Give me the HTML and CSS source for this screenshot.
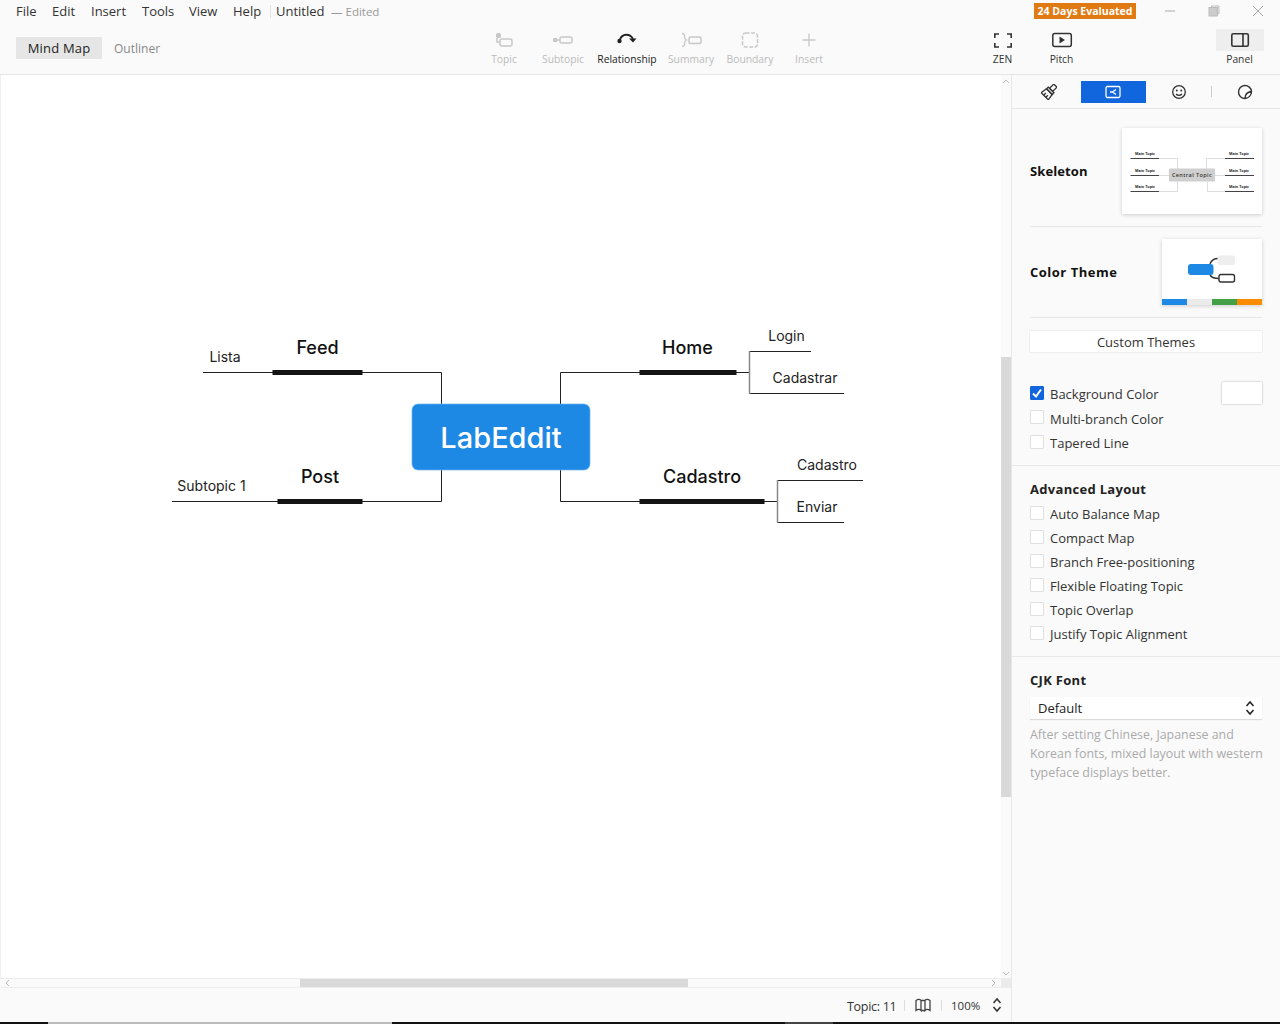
FILE: index.html
```html
<!DOCTYPE html>
<html lang="en">
<head>
<meta charset="utf-8">
<title>Untitled - Mind Map</title>
<link rel="stylesheet" href="styles.css">
</head>
<body>
<div class="app">
  <header class="top">
    <div class="titlebar">
      <nav class="menu">
        <span class="menu-file">File</span><span class="menu-edit">Edit</span><span class="menu-insert">Insert</span><span class="menu-tools">Tools</span><span class="menu-view">View</span><span class="menu-help">Help</span>
      </nav>
      <span class="title-sep"></span>
      <span class="doc-title">Untitled</span>
      <span class="doc-state">— Edited</span>
      <span class="badge">24 Days Evaluated</span>
      <div class="win">
        <svg width="12" height="12" viewBox="0 0 12 12"><path d="M1 6h10" stroke="#aaa" stroke-width="1" fill="none"/></svg>
        <svg width="12" height="12" viewBox="0 0 12 12"><path d="M3.5 2.5V1h7.500v7.500h-1.500" stroke="#bbb" fill="none"/><rect x="1" y="2.500" width="8.500" height="8.500" fill="#ccc" stroke="#bbb"/></svg>
        <svg width="12" height="12" viewBox="0 0 12 12"><path d="M1 1l10 10M11 1L1 11" stroke="#aaa" fill="none"/></svg>
      </div>
    </div>
    <div class="toolbar">
      <div class="modes">
        <span class="mode mode-on">Mind Map</span>
        <span class="mode">Outliner</span>
      </div>
      <div class="tools">
        <div class="tool off">
          <svg width="20" height="18" viewBox="0 0 20 18"><rect x="2" y="2" width="5" height="5" rx="1.500" fill="#c8c8c8"/><path d="M3 7v4h3" stroke="#c8c8c8" stroke-width="1.500" fill="none"/><rect x="6" y="8" width="12" height="7" rx="2" fill="none" stroke="#c8c8c8" stroke-width="1.500"/></svg>
          <span>Topic</span>
        </div>
        <div class="tool off">
          <svg width="22" height="18" viewBox="0 0 22 18"><rect x="1" y="7" width="4" height="4" fill="#c8c8c8"/><path d="M5 9h3" stroke="#c8c8c8" stroke-width="1.500"/><rect x="8" y="6" width="12" height="6" rx="1.500" fill="none" stroke="#c8c8c8" stroke-width="1.500"/></svg>
          <span>Subtopic</span>
        </div>
        <div class="tool rel">
          <svg width="22" height="18" viewBox="0 0 22 18"><path d="M4 8.500C6 2.500 14 2 17 8" stroke="#222" stroke-width="1.800" fill="none"/><circle cx="3.500" cy="10" r="2.200" fill="#222"/><path d="M13 7.500h7.500l-3.500 4z" fill="#222"/></svg>
          <span>Relationship</span>
        </div>
        <div class="tool off">
          <svg width="22" height="18" viewBox="0 0 22 18"><path d="M2 2.500c3 0 2.500 1 2.500 3s0 2.500 2 3.500c-2 1-2 1.500-2 3.500s.5 3-2.500 3" stroke="#c8c8c8" stroke-width="1.300" fill="none"/><rect x="9" y="6" width="12" height="6.500" rx="1.500" fill="none" stroke="#c8c8c8" stroke-width="1.500"/></svg>
          <span>Summary</span>
        </div>
        <div class="tool off">
          <svg width="20" height="18" viewBox="0 0 20 18"><rect x="2.500" y="2" width="15" height="14" rx="3" fill="none" stroke="#c8c8c8" stroke-width="1.500" stroke-dasharray="4 1.500"/></svg>
          <span>Boundary</span>
        </div>
        <div class="tool off">
          <svg width="20" height="18" viewBox="0 0 20 18"><path d="M10 2.500v13M3.500 9h13" stroke="#c8c8c8" stroke-width="1.300" fill="none"/></svg>
          <span>Insert</span>
        </div>
      </div>
      <div class="tools-right">
        <div class="tool on">
          <svg width="20" height="18" viewBox="0 0 20 18"><path d="M6 3H1.800v4M14 3h4.200v4M6 16H1.800v-4M14 16h4.200v-4" stroke="#333" stroke-width="1.600" fill="none"/></svg>
          <span>ZEN</span>
        </div>
        <div class="tool on">
          <svg width="22" height="18" viewBox="0 0 22 18"><rect x="1.800" y="2.500" width="18.500" height="13" rx="2" fill="none" stroke="#333" stroke-width="1.500"/><path d="M8.500 5.500v7l5.500-3.500z" fill="#333"/></svg>
          <span>Pitch</span>
        </div>
        <div class="tool on tool-panel">
          <svg width="20" height="18" viewBox="0 0 20 18"><rect x="1.800" y="2.800" width="16.500" height="12.500" rx="1.500" fill="none" stroke="#333" stroke-width="1.600"/><path d="M13 2.800v12.500" stroke="#333" stroke-width="1.600"/></svg>
          <span>Panel</span>
        </div>
      </div>
    </div>
  </header>

  <div class="main">
    <div class="work">
      <div class="work-top">
        <div class="canvas">
          <svg class="map" width="1001" height="903" viewBox="0 75 1001 903">
            <g class="thin">
              <path d="M203 372.500H441.500V404"/>
              <path d="M172 501.500H441.500V470"/>
              <path d="M560.500 404V372.500H749"/>
              <path d="M560.500 470V501.500H777"/>
              <path d="M749 351.500H811"/>
              <path d="M749 393.500H844"/>
              <path d="M777 480.500H863"/>
              <path d="M777 522.500H844"/>
            </g>
            <g class="bracket">
              <path d="M749.500 351V394"/>
              <path d="M777.500 480V523"/>
            </g>
            <g class="bar">
              <rect x="272.500" y="370" width="90" height="5"/>
              <rect x="277.500" y="499" width="85" height="5"/>
              <rect x="639.500" y="370" width="97" height="5"/>
              <rect x="639.500" y="499" width="125" height="5"/>
            </g>
            <rect class="central" x="412" y="404" width="178" height="66" rx="6"/>
            <text class="central-text" x="501" y="448">LabEddit</text>
            <text class="main-text" x="317.500" y="354">Feed</text>
            <text class="main-text" x="320" y="483">Post</text>
            <text class="main-text" x="687.500" y="354">Home</text>
            <text class="main-text" x="702" y="483">Cadastro</text>
            <text class="sub-text" x="225" y="362">Lista</text>
            <text class="sub-text" x="211.500" y="491">Subtopic 1</text>
            <text class="sub-text" x="786.500" y="341">Login</text>
            <text class="sub-text" x="805" y="383">Cadastrar</text>
            <text class="sub-text" x="827" y="470">Cadastro</text>
            <text class="sub-text" x="817" y="512">Enviar</text>
          </svg>
        </div>
        <div class="vscroll">
          <svg class="sb-arrow sb-up" width="10" height="10" viewBox="0 0 10 10"><path d="M2 6l3-3 3 3" stroke="#bbb" fill="none"/></svg>
          <div class="vtrack"><div class="vthumb"></div></div>
          <svg class="sb-arrow" width="10" height="10" viewBox="0 0 10 10"><path d="M2 4l3 3 3-3" stroke="#bbb" fill="none"/></svg>
        </div>
      </div>
      <div class="hscroll">
        <svg class="sb-arrow sb-left" width="10" height="8" viewBox="0 0 10 8"><path d="M6 1l-3 3 3 3" stroke="#bbb" fill="none"/></svg>
        <div class="htrack"><div class="hthumb"></div></div>
        <svg class="sb-arrow sb-right" width="10" height="8" viewBox="0 0 10 8"><path d="M4 1l3 3-3 3" stroke="#bbb" fill="none"/></svg>
        <div class="corner"></div>
      </div>
      <footer class="status">
        <span class="count">Topic: 11</span>
        <span class="status-sep"></span>
        <svg class="map-icon" width="16" height="14" viewBox="0 0 16 14"><path d="M1 2.500c2-1.500 4-1.500 5 0v10c-1-1.500-3-1.500-5 0zM6 2.500h4v10H6M10 2.500c1-1.500 3-1.500 5 0v10c-2-1.500-4-1.500-5 0z" fill="none" stroke="#444" stroke-width="1.300"/></svg>
        <span class="status-sep"></span>
        <span class="zoom">100%</span>
        <svg class="zoom-arrows" width="10" height="16" viewBox="0 0 10 16"><path d="M1.500 6l3.500-4 3.500 4M1.500 10l3.500 4 3.500-4" stroke="#333" stroke-width="1.500" fill="none"/></svg>
      </footer>
    </div>

    <aside class="panel">
      <div class="panel-tabs">
        <span class="ptab ptab-style">
          <svg width="16" height="16" viewBox="0 0 16 16"><g transform="rotate(45 8 8)" fill="none" stroke="#333" stroke-width="1.300"><rect x="5.800" y="-1" width="4.400" height="6"/><rect x="4" y="5" width="8" height="2.500"/><path d="M4 7.500h8l1 6.500H3z"/><path d="M6.500 14v-3M9.500 14v-3"/></g></svg>
        </span>
        <span class="ptab ptab-on">
          <svg width="16" height="14" viewBox="0 0 16 14"><rect x="1" y="1.500" width="14" height="11" rx="1.500" fill="none" stroke="#fff" stroke-width="1.300"/><path d="M11 4.500L7.500 7 11 9.500M7.500 7H5" stroke="#fff" stroke-width="1.300" fill="none"/></svg>
        </span>
        <span class="ptab ptab-face">
          <svg width="16" height="16" viewBox="0 0 16 16"><circle cx="8" cy="8" r="6.300" fill="none" stroke="#333" stroke-width="1.300"/><circle cx="5.800" cy="6.500" r="1" fill="#333"/><circle cx="10.200" cy="6.500" r="1" fill="#333"/><path d="M5 10c1.500 1.800 4.500 1.800 6 0" fill="none" stroke="#333" stroke-width="1.200"/></svg>
        </span>
        <span class="ptab-sep"></span>
        <span class="ptab ptab-sticker">
          <svg width="16" height="16" viewBox="0 0 16 16"><path d="M14.500 7.500A6.500 6.500 0 1 0 8 14.500C8 10.500 10.500 8 14.500 7.500zM14.500 7.500C14.500 11 12 14 8 14.500" fill="none" stroke="#333" stroke-width="1.400"/></svg>
        </span>
      </div>

      <section class="sec-main">
        <div class="thumb-row row-skel">
          <span class="label-strong label-tight">Skeleton</span>
          <div class="thumb thumb-skel">
            <svg width="140" height="86" viewBox="0 0 140 86">
              <g class="sk-line">
                <path d="M36 30.500H55.500V63.500H36M36 47.500H47"/>
                <path d="M104 30.500H84.500V41M104 47.500H93M104 63.500H85.500V54"/>
              </g>
              <g class="sk-dark">
                <path d="M8.500 30.500H37M8.500 47.500H37M8.500 63.500H37M103 30.500H132M103 47.500H132M103 63.500H132"/>
              </g>
              <rect x="47" y="40.500" width="46" height="13" rx="1" fill="#cfcfcf"/>
              <text class="sk-central" x="70" y="49">Central Topic</text>
              <text class="sk-main" x="23" y="27">Main Topic</text>
              <text class="sk-main" x="23" y="44">Main Topic</text>
              <text class="sk-main" x="23" y="60">Main Topic</text>
              <text class="sk-main" x="117" y="27">Main Topic</text>
              <text class="sk-main" x="117" y="44">Main Topic</text>
              <text class="sk-main" x="117" y="60">Main Topic</text>
            </svg>
          </div>
        </div>
        <div class="thumb-row row-theme">
          <span class="label-strong">Color Theme</span>
          <div class="thumb thumb-theme">
            <svg class="theme-svg" width="100" height="60" viewBox="0 0 100 60">
              <path d="M48 25c1.500-4 4-5.500 8-5.500M48 36c2 3 5 3.500 9 3.500" fill="none" stroke="#333" stroke-width="1.500"/>
              <rect x="26" y="25" width="25.500" height="11" rx="3" fill="#1e88e5"/>
              <rect x="55.500" y="16.500" width="17.500" height="9.500" rx="2.500" fill="#eee"/>
              <rect x="57" y="35.500" width="15.500" height="7.500" rx="2" fill="#fff" stroke="#333" stroke-width="1.400"/>
            </svg>
            <div class="swatches"><i class="sw-blue"></i><i class="sw-grey"></i><i class="sw-green"></i><i class="sw-orange"></i></div>
          </div>
        </div>
        <button class="btn-custom">Custom Themes</button>
        <div class="checks first-checks">
          <label class="check"><span class="box box-on"><svg width="14" height="14" viewBox="0 0 14 14"><path d="M3 7.500l3 3 5-7" stroke="#fff" stroke-width="2" fill="none"/></svg></span>Background Color<span class="color-well"></span></label>
          <label class="check"><span class="box"></span>Multi-branch Color</label>
          <label class="check"><span class="box"></span>Tapered Line</label>
        </div>
      </section>

      <section class="sec-adv">
        <h3 class="heading">Advanced Layout</h3>
        <label class="check"><span class="box"></span>Auto Balance Map</label>
        <label class="check"><span class="box"></span>Compact Map</label>
        <label class="check"><span class="box"></span>Branch Free-positioning</label>
        <label class="check"><span class="box"></span>Flexible Floating Topic</label>
        <label class="check"><span class="box"></span>Topic Overlap</label>
        <label class="check"><span class="box"></span>Justify Topic Alignment</label>
      </section>

      <section class="sec-cjk">
        <h3 class="heading">CJK Font</h3>
        <div class="select">
          <span>Default</span>
          <svg width="10" height="16" viewBox="0 0 10 16"><path d="M1.500 6l3.500-4 3.500 4M1.500 10l3.500 4 3.500-4" stroke="#222" stroke-width="1.500" fill="none"/></svg>
        </div>
        <p class="help">After setting Chinese, Japanese and Korean fonts, mixed layout with western typeface displays better.</p>
      </section>
    </aside>
  </div>

  <div class="taskbar"><i class="tb-a"></i><i class="tb-b"></i><i class="tb-c"></i><i class="tb-d"></i><i class="tb-e"></i></div>
</div>
</body>
</html>
```

FILE: styles.css
```css
* { box-sizing: border-box; }
html, body { margin: 0; height: 100%; }
body {
  background: #fafafa;
  color: #222;
  font-family: "Open Sans", "Noto Sans", "Liberation Sans", sans-serif;
  font-size: 13px;
  overflow: hidden;
}
.app { width: 1280px; height: 1024px; display: flex; flex-direction: column; }

/* top */
.top { height: 75px; flex: none; border-bottom: 1px solid #e6e6e6; background: #fafafa; }
.titlebar { height: 22px; display: flex; align-items: center; padding-left: 16px; }
.menu { display: flex; color: #333; }
.menu-file { width: 36px; }
.menu-edit { width: 39px; }
.menu-insert { width: 51px; }
.menu-tools { width: 47px; }
.menu-view { width: 44px; }
.menu-help { width: 37px; }
.title-sep { width: 1px; height: 13px; background: #e2e2e2; }
.doc-title { margin-left: 5px; width: 55px; color: #333; }
.doc-state { color: #999; font-size: 11.500px; width: 703px; }
.badge {
  width: 102px; height: 16px; background: #e07b14; color: #fff; font-weight: 700;
  font-size: 10.500px; line-height: 16px; text-align: center; white-space: nowrap;
}
.win { display: flex; gap: 32px; margin-left: 28px; }

.toolbar { height: 52px; display: flex; padding-left: 16px; }
.modes { width: 458.500px; display: flex; align-items: flex-start; padding-top: 15px; }
.mode { height: 22px; line-height: 23px; color: #888; margin-left: 12px; font-size: 12px; }
.mode-on { background: #e6e6e6; color: #222; width: 86px; text-align: center; margin-left: 0; letter-spacing: .2px; font-size: 13px; line-height: 22px; }
.tools { display: flex; }
.tools-right { display: flex; margin-left: 134.500px; }
.tool {
  width: 59px; height: 44px; margin-top: 8px; display: flex; flex-direction: column;
  align-items: center; font-size: 10.300px; line-height: 14px; white-space: nowrap; color: #333;
}
.tool svg { height: 18px; margin-top: 1px; margin-bottom: 3px; flex: none; }
.tool.off { color: #bbb; }
.tool.rel { width: 69px; color: #222; }
.tool-panel { width: 48px; margin-left: 124.500px; position: relative; }
.tool-panel::before {
  content: ""; position: absolute; left: 0; top: -1px; width: 48px; height: 22px; background: #eee;
}
.tool-panel svg, .tool-panel span { position: relative; }

/* main */
.main { flex: 1; display: flex; min-height: 0; }
.work { width: 1012px; display: flex; flex-direction: column; border-right: 1px solid #e8e8e8; }
.work-top { height: 903px; display: flex; flex: none; }
.canvas { width: 1001px; height: 903px; background: #fff; overflow: hidden; box-shadow: inset 1px 0 #efefef; }
.map { display: block; }
.thin path { fill: none; stroke: #222; stroke-width: 1; }
.bracket path { fill: none; stroke: #888; stroke-width: 1.500; }
.bar rect { fill: #141414; }
.central { fill: #1e88e5; stroke: #6db1ee; stroke-width: .7; }
.central-text { fill: #fff; font: 500 29px Inter, Roboto, sans-serif; text-anchor: middle; }
.main-text { fill: #111; font: 500 18px Inter, Roboto, sans-serif; text-anchor: middle; }
.sub-text { fill: #222; font: 400 14px Inter, Roboto, sans-serif; text-anchor: middle; }

.vscroll { width: 10px; background: #fafafa; display: flex; flex-direction: column; }
.sb-arrow { flex: none; display: block; }
.sb-up { margin-top: 2px; }
.vtrack { flex: 1; padding-top: 270px; }
.vthumb { height: 440px; background: #d9d9d9; }
.hscroll { height: 10px; flex: none; display: flex; background: #fafafa; border-top: 1px solid #ededed; border-bottom: 1px solid #ededed; }
.sb-left { margin-left: 3px; }
.sb-right { margin-right: 3px; }
.htrack { width: 975px; padding-left: 287px; }
.hthumb { width: 388px; height: 100%; background: #d9d9d9; }
.corner { width: 10px; background: #ebebeb; }
.status { flex: 1; display: flex; align-items: center; padding-left: 847px; background: #fafafa; color: #333; }
.count { width: 57px; white-space: nowrap; font-size: 12.500px; letter-spacing: -.3px; margin-top: 2px; }
.status-sep { width: 1px; height: 11px; background: #ddd; }
.map-icon { margin: 0 10px 0 10px; }
.zoom { margin-left: 9px; width: 36px; font-size: 11.500px; }
.zoom-arrows { margin-left: 5px; }

/* panel */
.panel { width: 268px; background: #fafafa; display: flex; flex-direction: column; }
.panel-tabs { height: 34px; flex: none; border-bottom: 1px solid #e6e6e6; position: relative; display: flex; align-items: center; padding-left: 29px; }
.ptab { display: flex; align-items: center; justify-content: center; height: 22px; }
.ptab-style { width: 16px; }
.ptab-on { width: 65px; background: #1166dd; margin-left: 24px; padding-right: 2px; }
.ptab-face { width: 16px; margin-left: 25px; }
.ptab-sep { width: 1px; height: 11px; background: #ccc; margin-left: 24px; }
.ptab-sticker { width: 16px; margin-left: 25px; }

.sec-main { padding: 0 18px; height: 357px; border-bottom: 1px solid #e8e8e8; flex: none; }
.thumb-row { display: flex; justify-content: space-between; align-items: center; border-bottom: 1px solid #e6e6e6; }
.row-skel { height: 117.500px; padding-top: 7.500px; }
.row-theme { height: 91px; }
.label-strong { font-weight: 700; font-size: 13px; color: #111; letter-spacing: .5px; }
.label-tight { letter-spacing: .1px; }
.thumb { background: #fff; box-shadow: 0 1px 4px rgba(0,0,0,.18); position: relative; }
.thumb-skel { width: 140px; height: 86px; }
.thumb-skel svg { display: block; }
.sk-line path { fill: none; stroke: #ddd; stroke-width: 1; }
.sk-dark path { fill: none; stroke: #444; stroke-width: 1; }
.sk-central { font: 600 5.500px "Open Sans", sans-serif; text-anchor: middle; fill: #333; letter-spacing: .4px; }
.sk-main { font: 700 3.700px "Open Sans", sans-serif; text-anchor: middle; fill: #222; }
.thumb-theme { width: 100px; height: 66px; }
.theme-svg { display: block; }
.swatches { display: flex; height: 6px; }
.swatches i { flex: 1; }
.sw-blue { background: #1e88e5; }
.sw-grey { background: #ebebeb; }
.sw-green { background: #43a047; }
.sw-orange { background: #fb8c00; }

.btn-custom {
  display: block; width: 232px; height: 21px; margin-top: 13px; background: #fff;
  border: 0; box-shadow: 0 0 1px rgba(0,0,0,.25); font: 13px "Open Sans", sans-serif;
  color: #333; padding: 1px 0 0;
}
.first-checks { margin-top: 30.300px; }
.check { display: flex; align-items: center; height: 24px; color: #333; position: relative; white-space: nowrap; }
.first-checks .check { height: 24.500px; }
.box {
  width: 14px; height: 14px; background: #fff; border: 1px solid #e0e0e0; margin-right: 6px;
  flex: none; display: block; border-radius: 1px; margin-top: -3px;
}
.box-on { background: #1166dd; border-color: #1166dd; }
.box svg { display: block; margin: -1px; }
.color-well {
  position: absolute; right: 0; top: 0; width: 40px; height: 22px; background: #fff;
  box-shadow: 0 0 2px rgba(0,0,0,.3);
}
.sec-adv { padding: 13px 18px 0; height: 191px; border-bottom: 1px solid #e8e8e8; flex: none; }
.heading { margin: 0; height: 23px; line-height: 21px; font-size: 13px; font-weight: 700; color: #222; letter-spacing: .3px; }
.sec-cjk { padding: 13px 18px 0; }
.sec-cjk .heading { height: 27px; }
.select {
  height: 22px; background: #fff; box-shadow: 0 1px 1px rgba(0,0,0,.12); display: flex;
  align-items: center; justify-content: space-between; padding: 0 7px 0 8px; color: #222;
}
.help { margin: 6px -3px 0 0; font-size: 12.400px; line-height: 19px; color: #aaa; }

.taskbar { height: 2px; flex: none; display: flex; background: #111; }
.taskbar i { display: block; height: 2px; }
.tb-a { width: 48px; background: #111; }
.tb-b { width: 344px; background: #bbb; }
.tb-c { width: 393px; background: #111; }
.tb-d { width: 48px; background: #444; }
.tb-e { flex: 1; background: #111; }
```
